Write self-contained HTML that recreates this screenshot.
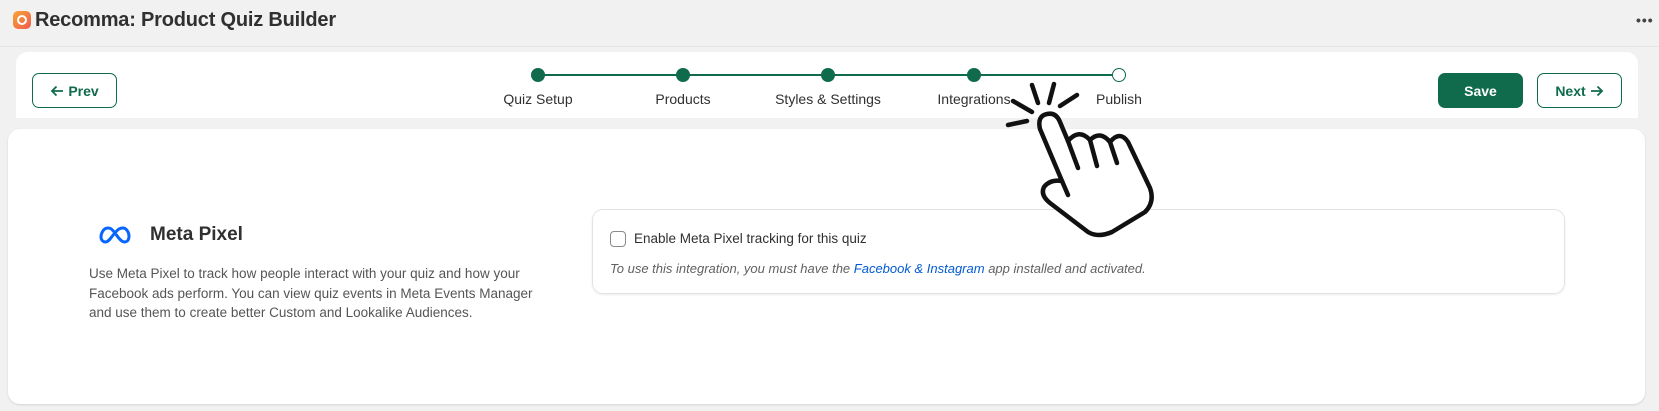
<!DOCTYPE html>
<html><head><meta charset="utf-8"><style>
*{box-sizing:border-box;margin:0;padding:0}
body{width:1659px;height:411px;background:#f1f1f1;font-family:"Liberation Sans",Arial,sans-serif;position:relative;overflow:hidden;color:#303030}
.abs{position:absolute}
.title{left:35px;top:9px;font-size:20px;font-weight:bold;color:#303030;letter-spacing:-0.2px}
.logo{left:13px;top:11px;width:18px;height:18px;border-radius:5px;background:linear-gradient(135deg,#f7a531,#f05a4f)}
.logo:after{content:"";position:absolute;left:4px;top:4px;width:10px;height:10px;border:2px solid #fff;border-radius:50%;box-sizing:border-box}
.hdrline{left:0;top:46px;width:1659px;height:1px;background:#e6e6e6}
.dots{left:1636px;top:12px;font-size:14px;color:#444;letter-spacing:1px;font-weight:bold}
.top{left:16px;top:52px;width:1622px;height:66px;background:#fff;border-radius:12px 12px 0 0}
.btn{position:absolute;height:35px;border:1.5px solid #0f6b4b;border-radius:7px;color:#0f6b4b;font-size:14px;font-weight:bold;display:flex;align-items:center;justify-content:center;gap:4px}
.card{left:8px;top:129px;width:1637px;height:275px;background:#fff;border-radius:12px;box-shadow:0 1px 2px rgba(0,0,0,.12)}
.dot{position:absolute;top:68px;width:14px;height:14px;border-radius:50%;background:#0f6b4b}
.lbl{position:absolute;top:91px;font-size:14px;color:#303030;transform:translateX(-50%);white-space:nowrap}
.desc{left:89px;top:264px;width:462px;font-size:13.5px;line-height:19.5px;color:#555}
.box{left:592px;top:209px;width:973px;height:85px;border:1px solid #e3e3e3;border-radius:11px;box-shadow:0 1px 2px rgba(0,0,0,.08)}
</style></head><body>
<div class="abs logo"></div>
<div class="abs title">Recomma: Product Quiz Builder</div>
<div class="abs dots">•••</div>
<div class="abs hdrline"></div>
<div class="abs top"></div>
<div class="btn" style="left:32px;top:73px;width:85px"><svg width="14" height="12" viewBox="0 0 14 12"><path d="M13 6H2M6.5 1.5L2 6l4.5 4.5" fill="none" stroke="#0f6b4b" stroke-width="1.8"/></svg>Prev</div>
<div class="btn" style="left:1438px;top:73px;width:85px;background:#0f6b4b;color:#fff">Save</div>
<div class="btn" style="left:1537px;top:73px;width:85px">Next<svg width="14" height="12" viewBox="0 0 14 12"><path d="M1 6h11M7.5 1.5L12 6l-4.5 4.5" fill="none" stroke="#0f6b4b" stroke-width="1.8"/></svg></div>
<div class="abs" style="left:538px;top:74px;width:581px;height:1.5px;background:#0f6b4b"></div>
<div class="dot" style="left:531px"></div>
<div class="dot" style="left:676px"></div>
<div class="dot" style="left:821px"></div>
<div class="dot" style="left:967px"></div>
<div class="dot" style="left:1112px;background:#fff;border:1.5px solid #0f6b4b"></div>
<div class="lbl" style="left:538px">Quiz Setup</div>
<div class="lbl" style="left:683px">Products</div>
<div class="lbl" style="left:828px">Styles &amp; Settings</div>
<div class="lbl" style="left:974px">Integrations</div>
<div class="lbl" style="left:1119px">Publish</div>
<div class="abs card"></div>
<svg class="abs" style="left:99px;top:226px" width="32" height="18" viewBox="0 0 32 18"><path d="M9 2C4 2 2 8 2 11c0 3 2 5 4.5 5C10 16 12 11 16 7c3-4 5-5 8-5s6 4 6 8-2 6-4.5 6C22 16 19 11 16 7 12 2 11 2 9 2z" fill="none" stroke="#0866ff" stroke-width="3"/></svg>
<div class="abs" style="left:150px;top:224px;font-size:19px;font-weight:bold;color:#303030">Meta Pixel</div>
<div class="abs desc">Use Meta Pixel to track how people interact with your quiz and how your Facebook ads perform. You can view quiz events in Meta Events Manager and use them to create better Custom and Lookalike Audiences.</div>
<div class="abs box"></div>
<div class="abs" style="left:610px;top:231px;width:16px;height:16px;border:1.5px solid #8a8a8a;border-radius:4px"></div>
<div class="abs" style="left:634px;top:231px;font-size:13.5px;color:#303030">Enable Meta Pixel tracking for this quiz</div>
<div class="abs" style="left:610px;top:261px;font-size:13px;font-style:italic;color:#616161">To use this integration, you must have the <span style="color:#005bd3">Facebook &amp; Instagram</span> app installed and activated.</div>
<svg class="abs" style="left:0;top:0" width="1659" height="411">
<g stroke="#111" stroke-width="4.5" stroke-linecap="round" stroke-linejoin="round" fill="none">
<path d="M1032 85L1038 103M1054 84L1049 103M1077 95L1060 106M1013 101L1032 112M1008 125L1027 121"/>
<path fill="#fff" d="M1062 181L1040 129Q1037 116 1047 114Q1056 112 1060 122L1068 141Q1079 128 1090 140Q1100 130 1110 142Q1120 130 1128 142L1150 188Q1155 202 1145 212L1112 232Q1098 238 1088 232L1050 203Q1040 195 1044 187Q1050 179 1062 181Z"/>
<path d="M1068 141L1078 168M1090 140L1097 166M1110 142L1117 163M1062 181L1068 195"/>
</g></svg>
</body></html>
